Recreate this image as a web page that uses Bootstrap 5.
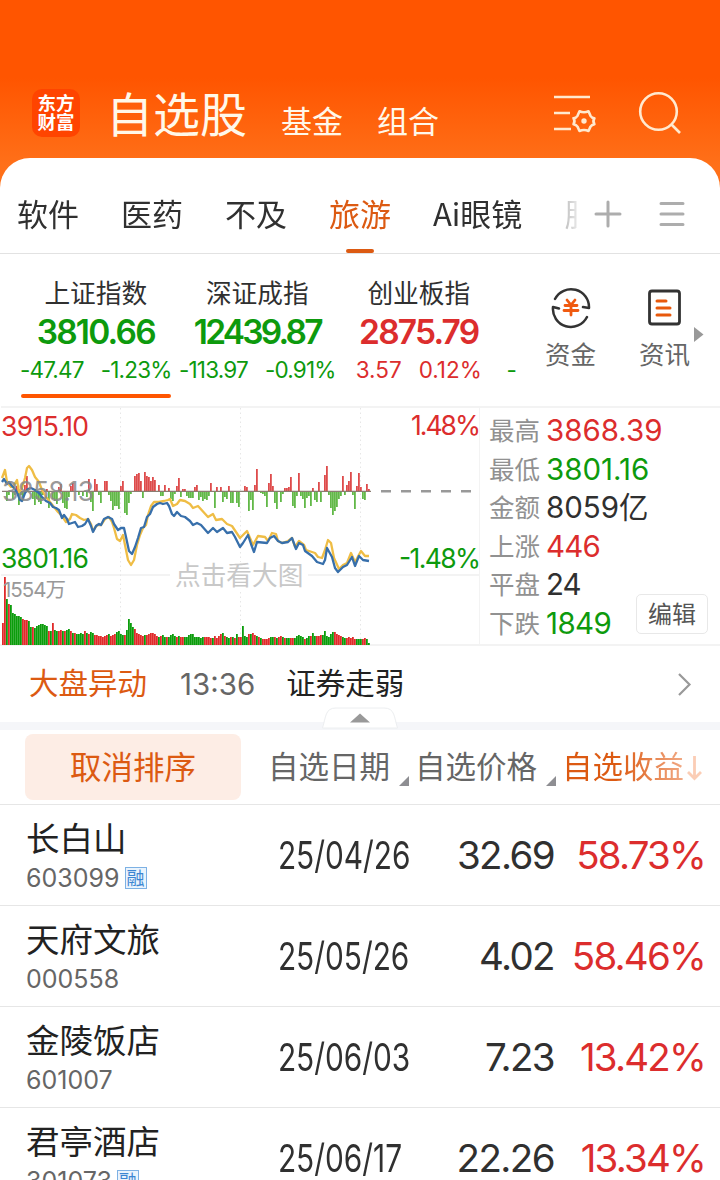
<!DOCTYPE html>
<html lang="zh-CN">
<head>
<meta charset="utf-8">
<meta name="viewport" content="width=device-width, initial-scale=1">
<title>自选股</title>
<link href="https://cdn.jsdelivr.net/npm/bootstrap@5.3.0/dist/css/bootstrap.min.css" rel="stylesheet">
<style>
  :root { --up:#dc2d2d; --down:#0d9a0d; --ink:#303030; --soft:#666; --brand:#dc5a12; }
  body { width:720px; height:1180px; overflow:hidden; color:var(--ink); line-height:1;
         font-family:"Noto Sans CJK SC","Noto Sans",sans-serif; background:#fff; }
  .num { font-family:Inter,"Noto Sans CJK SC",sans-serif; white-space:nowrap; }
  .up { color:var(--up); } .down { color:var(--down); }

  .topbar { height:190px; padding:67px 38px 31px 32px; background:linear-gradient(#ff5500 0 78px,#ff7019 165px); color:#fff8ea; }
  .logo { width:48px; height:48px; border-radius:10px; background:#ff4400; color:#fff; font-size:18.5px; font-weight:700; line-height:19px; padding-top:4px; }
  .title-main { font-size:47px; line-height:60px; margin:-3px 0 0 26px; }
  .title-sub { font-size:31px; line-height:40px; margin-top:13px; }

  .sheet { margin-top:-32px; border-radius:30px 30px 0 0; background:#fff; position:relative; }
  .tabs { height:96px; border-bottom:1px solid #e2e2e2; padding-left:17px; }
  .tabs-scroll { width:560px; height:95px; overflow:hidden; gap:42px; font-size:31px;
                 -webkit-mask-image:linear-gradient(90deg,#000 535px,transparent 568px); mask-image:linear-gradient(90deg,#000 535px,transparent 568px); }
  .tab { line-height:45px; padding-top:32px; flex:none; white-space:nowrap; }
  .tab.current { color:var(--brand); position:relative; }
  .tab.current::after { content:""; position:absolute; left:17px; bottom:0; width:28px; height:4px; border-radius:2px; background:var(--brand); }

  .indices { height:152px; padding-left:15px; }
  .index { width:161.5px; flex:none; padding-top:18px; }
  .index-name { font-size:25.7px; line-height:40px; }
  .index-value { font-size:33.5px; font-weight:600; line-height:38px; letter-spacing:-1.8px; padding-top:1px; }
  .index-value.long { letter-spacing:-2.8px; }
  .index-change { font-size:22.5px; line-height:36px; letter-spacing:-.8px; gap:17px; padding-top:1px; }
  .index.chosen::after { content:""; display:block; width:150px; height:4px; margin:6px auto 0; border-radius:2px; background:#ff5500; }
  .peek { width:24px; padding-top:97px; padding-left:7px; }
  .tool { width:94px; flex:none; padding-top:33px; font-size:25.5px; color:var(--soft); }
  .tool span { line-height:40px; margin-top:4px; white-space:nowrap; }

  .market { height:240px; }
  .stats { width:240px; padding:3px 0 0 9px; border-top:2px solid #f3f3f3; border-bottom:2px solid #f3f3f3; position:relative; }
  .stat { height:38.6px; line-height:38.6px; }
  .stat dt { width:57px; font-size:25.5px; font-weight:400; color:#919191; line-height:36px; }
  .stat dd { font-size:29.5px; margin:0; }
  .edit { position:absolute; right:12px; bottom:10px; width:72px; height:40px; border:1px solid #e8e8e8; border-radius:5px; background:#fff; color:#555; font-size:24px; line-height:33px; padding:0 0 3px; }

  .news { height:76px; padding:0 27px 0 29px; font-size:29.5px; }
  .news > * { line-height:71px; }
  .band { height:8px; background:#f5f6f9; position:relative; }
  .band svg { position:absolute; left:322px; top:-15px; }

  .quote-grid { display:grid; grid-template-columns:243px 169px 142px 1fr; }
  .heads { height:75px; border-bottom:1px solid #e6e6e6; font-size:30.5px; color:var(--soft); }
  .heads > * { line-height:71px; white-space:nowrap; }
  .unsort { width:216px; height:66px; margin:4px 0 0 25px; border-radius:8px; background:#fdede5; color:var(--brand); font-size:31.5px; line-height:62px; }
  .corner { position:absolute; top:46px; width:10px; height:10px; background:#8e8e92; clip-path:polygon(100% 0,100% 100%,0 100%); }
  .fade-out { color:transparent; background:linear-gradient(90deg,#dc5a12 0 55px,#f0a57e 118px,#fde4d6 146px); -webkit-background-clip:text; background-clip:text; }
  .quote { height:101px; border-bottom:1px solid #e6e6e6; }
  .quote-name { font-size:33.5px; line-height:42px; padding-top:11px; color:#222; }
  .quote-code { font-size:25px; line-height:30px; margin-top:5px; color:var(--soft); }
  .margin-tag { width:22px; height:22px; margin-left:5px; border:1px solid #7db1e4; background:#eaf4fd; color:#3c86d2; font-size:18px; line-height:18px; font-family:"Noto Sans CJK SC",sans-serif; }
  .figure-cell { font-size:38.5px; line-height:101px; }
  .date-cell { transform:scaleX(.775); transform-origin:0 50%; padding-left:45px; }
  .price { letter-spacing:-1.6px; }
  .gain { letter-spacing:-1.8px; padding-right:15px; }
</style>
</head>
<body>
<header class="topbar d-flex align-items-center">
  <div class="logo text-center">东方<br>财富</div>
  <div class="title-main">自选股</div>
  <div class="title-sub" style="margin-left:34px">基金</div>
  <div class="title-sub" style="margin-left:34px">组合</div>
  <svg class="ms-auto" width="44" height="42" viewBox="0 0 44 42" fill="none" stroke="#ffe9cf" stroke-width="2.6">
    <path d="M1 5h36M1 21h16M1 37h17"/>
    <path stroke-linejoin="round" d="M26.500 19.300q4.500 2 9 0l2 4.500q1.200 2 3.900 2.400q-2 3 0 6q-2.700.5-3.900 2.400l-2 4.400q-4.500-2-9 0l-2-4.400q-1.200-1.900-4-2.400q2-3 0-6q2.800-.4 4-2.400z"/>
    <circle cx="31" cy="29" r="2.700" fill="#ffe9cf" stroke="none"/>
  </svg>
  <svg style="margin-left:41px" width="44" height="44" viewBox="0 0 44 44" fill="none" stroke="#ffe9cf" stroke-width="2.600"><circle cx="20.500" cy="20.500" r="18.300"/><path d="M33 33l9 9"/></svg>
</header>

<main class="sheet">
  <nav class="tabs d-flex align-items-center">
    <div class="tabs-scroll d-flex">
      <div class="tab">软件</div><div class="tab">医药</div><div class="tab">不及</div>
      <div class="tab current">旅游</div><div class="tab">Ai眼镜</div><div class="tab" style="color:#999">股</div>
    </div>
    <svg style="margin-left:17px;margin-top:17px" width="28" height="28" stroke="#adadad" stroke-width="3" stroke-linecap="round"><path d="M2 14h24M14 2v24"/></svg>
    <svg style="margin-left:37px;margin-top:17px" width="26" height="28" stroke="#adadad" stroke-width="3" stroke-linecap="round"><path d="M2 3.500h22M2 14h22M2 24.500h22"/></svg>
  </nav>

  <section class="indices d-flex">
    <div class="index chosen text-center">
      <div class="index-name">上证指数</div><div class="index-value num down">3810.66</div>
      <div class="index-change num down d-flex justify-content-center"><span>-47.47</span><span>-1.23%</span></div>
    </div>
    <div class="index text-center">
      <div class="index-name">深证成指</div><div class="index-value long num down">12439.87</div>
      <div class="index-change num down d-flex justify-content-center"><span>-113.97</span><span>-0.91%</span></div>
    </div>
    <div class="index text-center">
      <div class="index-name">创业板指</div><div class="index-value num up">2875.79</div>
      <div class="index-change num up d-flex justify-content-center" style="letter-spacing:0"><span>3.57</span><span>0.12%</span></div>
    </div>
    <div class="peek num down"><div class="index-change">-</div></div>
    <div class="tool d-flex flex-column align-items-center">
      <svg width="42" height="42" viewBox="0 0 42 42" fill="none" stroke="#333" stroke-width="2.500" stroke-linecap="round" stroke-linejoin="round">
        <path d="M5 12A18 18 0 0 1 39 21L33 20M37 30A18 18 0 0 1 3 20L9 21.500"/>
        <path stroke="#f05a10" stroke-width="2.800" d="M17 13l4 5 4-5M15 18.500h12M14 23.500h14M21 18v10"/>
      </svg><span>资金</span>
    </div>
    <div class="tool d-flex flex-column align-items-center">
      <svg width="42" height="42" viewBox="0 0 42 42" fill="none" stroke="#333" stroke-width="2.800" stroke-linecap="round">
        <rect x="5.500" y="4" width="30" height="33" rx="2.500"/><path stroke="#e8590c" stroke-width="3" d="M13 14h9M13 21h13M13 28h13"/>
      </svg><span>资讯</span>
    </div>
    <svg style="margin-left:-18px;margin-top:73px" width="10" height="15"><path fill="#999" d="M0 0l9.500 7.500L0 15z"/></svg>
  </section>

  <section class="market d-flex">
    <svg id="chart" class="flex-shrink-0" width="480" height="240" viewBox="0 406 480 240" font-family="Inter,'Noto Sans CJK SC',sans-serif">
      <g fill="none" stroke="#f3f3f3" stroke-width="2"><path d="M1 407h479M1 575h169M308 575h172M0 645h480M480 406v240"/></g>
      <path d="M120.500 408v236M240.500 408v154M240.500 592v52M360.500 408v236" stroke="#e6e6e6" stroke-dasharray="1.500 3"/>
      <g id="volume"></g><g id="momentum"></g>
      <path d="M2 491.300h369" stroke="#8a7d72" stroke-width="1.300"/>
      <path d="M381 491.300h92" stroke="#999" stroke-width="2.400" stroke-dasharray="10 10"/>
      <g fill="none" stroke-width="2.300" stroke-linejoin="round">
        <polyline stroke="#efbd45" points="2,478 5,470 7,482 11,487 14,485 17,480 19,492 22,488 25,478 27,468 29,466 32,470 35,477 39,482 42,490 46,497 50,502 54,507 58,512 62,516 66,522 70,519 72,514 76,515 80,518 84,520 88,519 91,524 93,531 97,525 101,525 105,519 109,517 112,522 114,528 117,539 120,541 123,535 125,545 128,560 131,565 134,560 137,545 140,535 143,528 146,525 148,515 151,506 154,502 159,502 164,501 168,500 170,499 173,506 177,504 180,500 185,501 190,504 193,508 198,506 208,517 213,514 216,520 222,519 227,524 232,526 240,538 247,531 253,545 258,536 265,537 268,541 272,533 276,534 278,541 282,543 288,541 292,538 295,547 299,541 304,545 306,550 315,553 318,557 322,558 325,550 328,540 331,543 334,558 339,569 343,565 347,563 351,553 355,562 361,551 365,556 369,556"/>
        <polyline stroke="#376fab" points="2,482 4,479 7,484 9,482 12,486 15,489 18,495 20,500 22,501 25,493 28,489 31,488 35,490 39,493 42,497 46,501 50,503 53,507 56,508 59,510 62,518 64,515 67,519 69,524 72,523 75,522 78,527 82,526 85,524 88,519 91,526 93,532 96,526 99,524 101,525 104,519 108,517 112,519 114,524 118,530 121,528 124,528 126,537 129,551 132,554 135,547 138,538 141,528 144,527 147,517 150,514 153,507 157,504 160,503 163,504 167,503 169,506 172,514 174,516 177,512 181,516 185,517 190,521 193,525 197,523 201,525 208,533 213,528 217,532 223,528 227,533 232,532 235,537 240,547 243,543 248,535 251,544 254,552 257,542 267,543 270,538 274,536 278,541 282,543 288,542 292,538 296,549 299,543 303,545 305,551 312,556 317,562 323,564 325,560 327,548 332,557 335,568 338,572 343,567 347,565 352,557 355,566 359,556 363,560 369,561"/>
      </g>
      <text x="1" y="435.500" font-size="26.500" fill="#dc2d2d" textLength="88">3915.10</text>
      <text x="2" y="501" font-size="26.500" fill="#888" fill-opacity=".85" textLength="92">3858.13</text>
      <text x="1" y="568" font-size="26.500" fill="#0d9a0d" textLength="88">3801.16</text>
      <text x="3" y="597" font-size="20.500" fill="#999" textLength="63">1554万</text>
      <text x="411" y="435" font-size="26.500" fill="#dc2d2d" textLength="70">1.48%</text>
      <text x="399" y="568" font-size="26.500" fill="#0d9a0d" textLength="82">-1.48%</text>
      <text x="175" y="584.500" font-size="25.700" fill="#c8c8c8">点击看大图</text>
    </svg>
    <dl class="stats mb-0">
      <div class="stat d-flex"><dt>最高</dt><dd class="num up">3868.39</dd></div>
      <div class="stat d-flex"><dt>最低</dt><dd class="num down">3801.16</dd></div>
      <div class="stat d-flex"><dt>金额</dt><dd class="num">8059亿</dd></div>
      <div class="stat d-flex"><dt>上涨</dt><dd class="num up" style="letter-spacing:-.8px">446</dd></div>
      <div class="stat d-flex"><dt>平盘</dt><dd class="num" style="letter-spacing:-1px">24</dd></div>
      <div class="stat d-flex"><dt>下跌</dt><dd class="num down" style="letter-spacing:-.6px">1849</dd></div>
      <button class="edit">编辑</button>
    </dl>
  </section>

  <section class="news d-flex">
    <span style="color:#dc5a12">大盘异动</span>
    <span class="num" style="margin-left:33px;line-height:77px;color:#666">13:36</span>
    <span style="margin-left:31px;color:#222">证券走弱</span>
    <svg class="ms-auto" style="margin-top:26px" width="16" height="24" fill="none" stroke="#999" stroke-width="2.200"><path d="M2 2l10.500 10.500L2 23"/></svg>
  </section>
  <div class="band"><svg width="76" height="22"><path d="M.5 21C4 10 3 1 14 1H62C73 1 72 10 75.500 21z" fill="#fff" stroke="#eceef0"/><path d="M28 15.500L38 6.500l10 9z" fill="#999"/></svg></div>

  <section>
    <div class="heads quote-grid">
      <div class="unsort text-center">取消排序</div>
      <div class="position-relative" style="padding-left:25px">自选日期<i class="corner" style="left:156px"></i></div>
      <div class="position-relative" style="padding-left:3px">自选价格<i class="corner" style="left:134px"></i></div>
      <div class="d-flex" style="padding-left:8px"><span class="fade-out">自选收益</span><svg style="margin-top:25px;margin-left:1px" width="18" height="26" fill="none" stroke="#fbcdb5" stroke-width="2.800"><path d="M9.500 1v22M3 17l6.500 6.500L16 17"/></svg></div>
    </div>
    <div id="quotes"></div>
  </section>
</main>

<script>
  // Watch-list rows
  const quotes = [
    ['长白山','603099',1,'25/04/26','32.69','58.73%'],
    ['天府文旅','000558',0,'25/05/26','4.02','58.46%'],
    ['金陵饭店','601007',0,'25/06/03','7.23','13.42%'],
    ['君亭酒店','301073',1,'25/06/17','22.26','13.34%']
  ];
  document.getElementById('quotes').innerHTML = quotes.map(([name,code,margin,date,price,gain]) => `
    <div class="quote quote-grid">
      <div style="padding-left:26px"><div class="quote-name">${name}</div>
        <div class="quote-code num d-flex align-items-center">${code}${margin ? '<span class="margin-tag text-center">融</span>' : ''}</div></div>
      <div class="figure-cell num date-cell">${date}</div>
      <div class="figure-cell num text-end price">${price}</div>
      <div class="figure-cell num text-end up gain">${gain}</div>
    </div>`).join('');

  // Momentum bars: x position and signed height
  const momentum = {7:-10,9:-4,13:-8,15:-4,17:5,19:-14,21:-4,23:-8,25:6,27:15,33:-8,35:-14,37:-8,39:-11,41:-13,43:-4,47:2,49:-17,53:-8,55:-10,57:-13,59:4,61:7,63:-12,65:-17,67:-18,69:-6,71:5,73:8,79:-4,83:-5,87:-6,89:12,91:-11,93:-20,95:12,97:7,99:-4,101:-12,105:10,107:10,109:-4,111:-10,113:-19,115:-15,117:-15,119:-18,121:5,123:10,125:-22,127:-24,129:-12,131:-3,135:15,137:17,139:18,141:10,143:-7,145:19,147:15,149:14,151:10,153:14,155:11,159:6,161:-5,163:-5,165:6,169:3,171:-8,173:-10,175:-3,179:13,177:5,181:-6,183:2,185:2,187:-5,189:-7,191:-7,193:-7,195:4,197:6,199:-9,201:-6,203:-10,205:-8,207:-9,209:-5,211:8,215:-17,217:4,221:4,223:-11,225:-6,227:-8,229:5,231:-12,233:-12,237:-12,239:-16,245:5,247:4,249:-20,251:-9,253:-19,255:6,257:22,261:-2,263:-3,265:-5,267:-16,269:8,271:17,273:5,275:-12,277:-18,281:-11,283:-3,285:3,287:3,289:4,291:14,293:-15,295:-17,297:-5,299:18,301:-5,303:-8,305:-17,307:-7,309:-5,311:-15,313:3,315:-9,317:-11,319:9,321:-11,325:16,327:25,329:-4,331:-17,333:-24,335:-20,337:-16,339:-8,341:-5,343:15,345:-4,347:6,349:10,351:19,353:-4,355:-18,357:5,359:18,361:4,363:-8,365:-9,367:7,369:2};
  document.getElementById('momentum').innerHTML = Object.entries(momentum).map(([x,v]) =>
    `<rect x="${x-1}" y="${v>0?491-v:491}" width="1.800" height="${Math.abs(v)}" fill="${v>0?'#de4b4b':'#62b848'}"/>`).join('');

  // Volume bars, two pixels apart
  const volume = [22,68,46,41,40,32,31,29,29,28,26,25,25,24,18,18,17,19,20,21,21,20,19,14,14,22,15,14,14,15,14,14,15,16,14,12,12,11,11,12,11,14,12,11,13,12,10,10,9,9,8,9,10,11,9,10,11,13,14,11,10,10,15,26,22,18,16,12,11,10,9,10,10,11,12,12,11,9,8,9,10,8,8,8,10,11,9,8,9,8,8,8,8,10,11,11,8,8,8,7,8,8,8,8,7,7,9,7,9,11,12,9,8,7,8,8,7,11,8,8,19,9,8,11,11,12,10,9,8,7,6,6,6,7,8,8,8,7,8,9,8,7,7,7,7,7,7,9,10,9,8,6,7,9,9,12,9,9,9,10,10,14,9,8,11,13,13,11,10,9,8,7,7,8,7,8,6,6,6,6,6,7,6,2];
  const tone = 'rrgrggggggrrrggrgggggggrgrggrrgrggrgrggggrgrggrrrrrrrgrrrggggrggggrrrrrgrrrrrrgrggrggggrgrrggggggggggrrrrgrrrrgrggrgrgrrgggrgrrgrgrrrrggrgrrgrggrrgggggrggrggrrrggggggrrrrggrrrrrgggrrgg';
  document.getElementById('volume').innerHTML = volume.map((v,i) =>
    `<rect x="${2+i*2}" y="${645-v}" width="1.800" height="${v}" fill="${tone[i]==='r'?'#e02a2a':'#0b9c0b'}"/>`).join('');
</script>
<script src="https://cdn.jsdelivr.net/npm/bootstrap@5.3.0/dist/js/bootstrap.bundle.min.js"></script>
</body>
</html>
